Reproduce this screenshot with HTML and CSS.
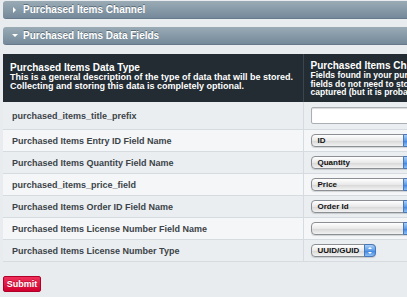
FILE: index.html
```html
<!DOCTYPE html>
<html lang="en">
<head>
  <meta charset="UTF-8">
  <title>Purchased Items Settings</title>
  <link rel="stylesheet" href="styles.css">
</head>
<body>
  <div class="page">
    <div class="panel-head closed"><span class="arrow"></span>Purchased Items Channel</div>
    <div class="panel-head open"><span class="arrow"></span>Purchased Items Data Fields</div>

    <table class="fields">
      <thead>
        <tr>
          <th class="col-label">
            <div class="th-title">Purchased Items Data Type</div>
            This is a general description of the type of data that will be stored.<br>
            Collecting and storing this data is completely optional.
          </th>
          <th class="col-value">
            <div class="th-title">Purchased Items Channel Fields</div>
            Fields found in your purchased items channel. These<br>
            fields do not need to store this data. It will not be<br>
            captured (but it is probably a good idea to store it).
          </th>
        </tr>
      </thead>
      <tbody>
        <tr class="first">
          <td>purchased_items_title_prefix</td>
          <td><span class="text-input"></span></td>
        </tr>
        <tr>
          <td>Purchased Items Entry ID Field Name</td>
          <td><span class="select wide">ID<span class="stepper"></span></span></td>
        </tr>
        <tr>
          <td>Purchased Items Quantity Field Name</td>
          <td><span class="select wide">Quantity<span class="stepper"></span></span></td>
        </tr>
        <tr>
          <td>purchased_items_price_field</td>
          <td><span class="select wide">Price<span class="stepper"></span></span></td>
        </tr>
        <tr>
          <td>Purchased Items Order ID Field Name</td>
          <td><span class="select wide">Order Id<span class="stepper"></span></span></td>
        </tr>
        <tr>
          <td>Purchased Items License Number Field Name</td>
          <td><span class="select wide"><span class="stepper"></span></span></td>
        </tr>
        <tr>
          <td>Purchased Items License Number Type</td>
          <td><span class="select">UUID/GUID<span class="stepper"></span></span></td>
        </tr>
      </tbody>
    </table>

    <button class="submit">Submit</button>
  </div>
</body>
</html>
```

FILE: styles.css
```css
body {
  margin: 0;
  background-color: #e8ecef;
  font-family: "Liberation Sans", Arial, sans-serif;
  overflow: hidden;
}

.page {
  width: 720px;
  padding: 1px 0 0 3px;
}

.panel-head {
  position: relative;
  height: 17px;
  line-height: 17px;
  padding-left: 20px;
  margin-bottom: 8px;
  color: #fff;
  font-size: 10px;
  font-weight: bold;
  text-shadow: 0 -1px 0 rgba(40, 55, 65, 0.5);
  background: linear-gradient(#9aabb5, #74899a);
  border-bottom: 1px solid #67798a;
  border-radius: 3px 0 0 3px;
}

.panel-head.open {
  margin-bottom: 9px;
}

.arrow {
  position: absolute;
  left: 10px;
  top: 6px;
  width: 0;
  height: 0;
}

.closed .arrow {
  border-left: 3px solid #fff;
  border-top: 3px solid transparent;
  border-bottom: 3px solid transparent;
}

.open .arrow {
  left: 9px;
  top: 7px;
  border-top: 3px solid #fff;
  border-left: 3px solid transparent;
  border-right: 3px solid transparent;
}

.fields {
  border-collapse: collapse;
  width: 700px;
}

.fields th {
  background-color: #222c32;
  color: #fff;
  font-size: 9px;
  font-weight: bold;
  text-align: left;
  vertical-align: top;
  height: 48px;
  box-sizing: border-box;
  white-space: nowrap;
}

.fields th.col-label {
  width: 300px;
  padding: 9px 7px 0 7px;
  line-height: 9px;
  border-right: 1px solid #3a464e;
}

.fields th.col-value {
  padding: 7px 7px 0 7px;
  font-size: 8.5px;
  line-height: 8.5px;
}

.th-title {
  font-size: 10px;
  line-height: 10px;
}

.fields td {
  height: 21px;
  padding: 0 0 0 9px;
  font-size: 9px;
  font-weight: bold;
  color: #3c4349;
  border-bottom: 1px solid #d5dbdf;
  background-color: #ebeef1;
  white-space: nowrap;
}

.fields td + td {
  padding-left: 7px;
  border-left: 1px solid #d5dbdf;
}

.fields tbody tr:nth-child(even) td {
  background-color: #f5f6f8;
}

.fields tr.first td {
  height: 27px;
}

.text-input {
  display: block;
  width: 200px;
  height: 15px;
  background-color: #fff;
  border: 1px solid #a9afb4;
  border-radius: 2px;
  box-shadow: inset 0 1px 1px rgba(0, 0, 0, 0.15);
}

.select {
  position: relative;
  display: inline-block;
  box-sizing: border-box;
  height: 13px;
  line-height: 11px;
  padding: 0 16px 0 6px;
  font-size: 8px;
  font-weight: bold;
  color: #111;
  border: 1px solid #8b8e92;
  border-radius: 4px;
  background: linear-gradient(#ffffff, #e9e9e9 50%, #d6d6d6 51%, #f2f2f2);
  box-shadow: 0 1px 1px rgba(0, 0, 0, 0.15);
  vertical-align: middle;
}

.select.wide {
  width: 104px;
}

.stepper {
  position: absolute;
  top: -1px;
  right: -1px;
  bottom: -1px;
  width: 12px;
  border-radius: 0 4px 4px 0;
  border: 1px solid #4a77b8;
  box-sizing: border-box;
  background: linear-gradient(#a9cff6, #5e9ce8 50%, #3b7fdc 51%, #8cc0f5);
}

.stepper::before,
.stepper::after {
  content: "";
  position: absolute;
  left: 3px;
  border-left: 2px solid transparent;
  border-right: 2px solid transparent;
}

.stepper::before {
  top: 2px;
  border-bottom: 2px solid #fff;
}

.stepper::after {
  bottom: 2px;
  border-top: 2px solid #fff;
}

.submit {
  display: block;
  margin-top: 14px;
  height: 16px;
  width: 38px;
  padding: 0;
  font-family: "Liberation Sans", Arial, sans-serif;
  font-size: 9px;
  font-weight: bold;
  color: #fff;
  text-shadow: 0 -1px 0 rgba(120, 0, 20, 0.4);
  background: linear-gradient(#f0305a, #d0002e);
  border: 1px solid #b0002a;
  border-radius: 2px;
}
```
